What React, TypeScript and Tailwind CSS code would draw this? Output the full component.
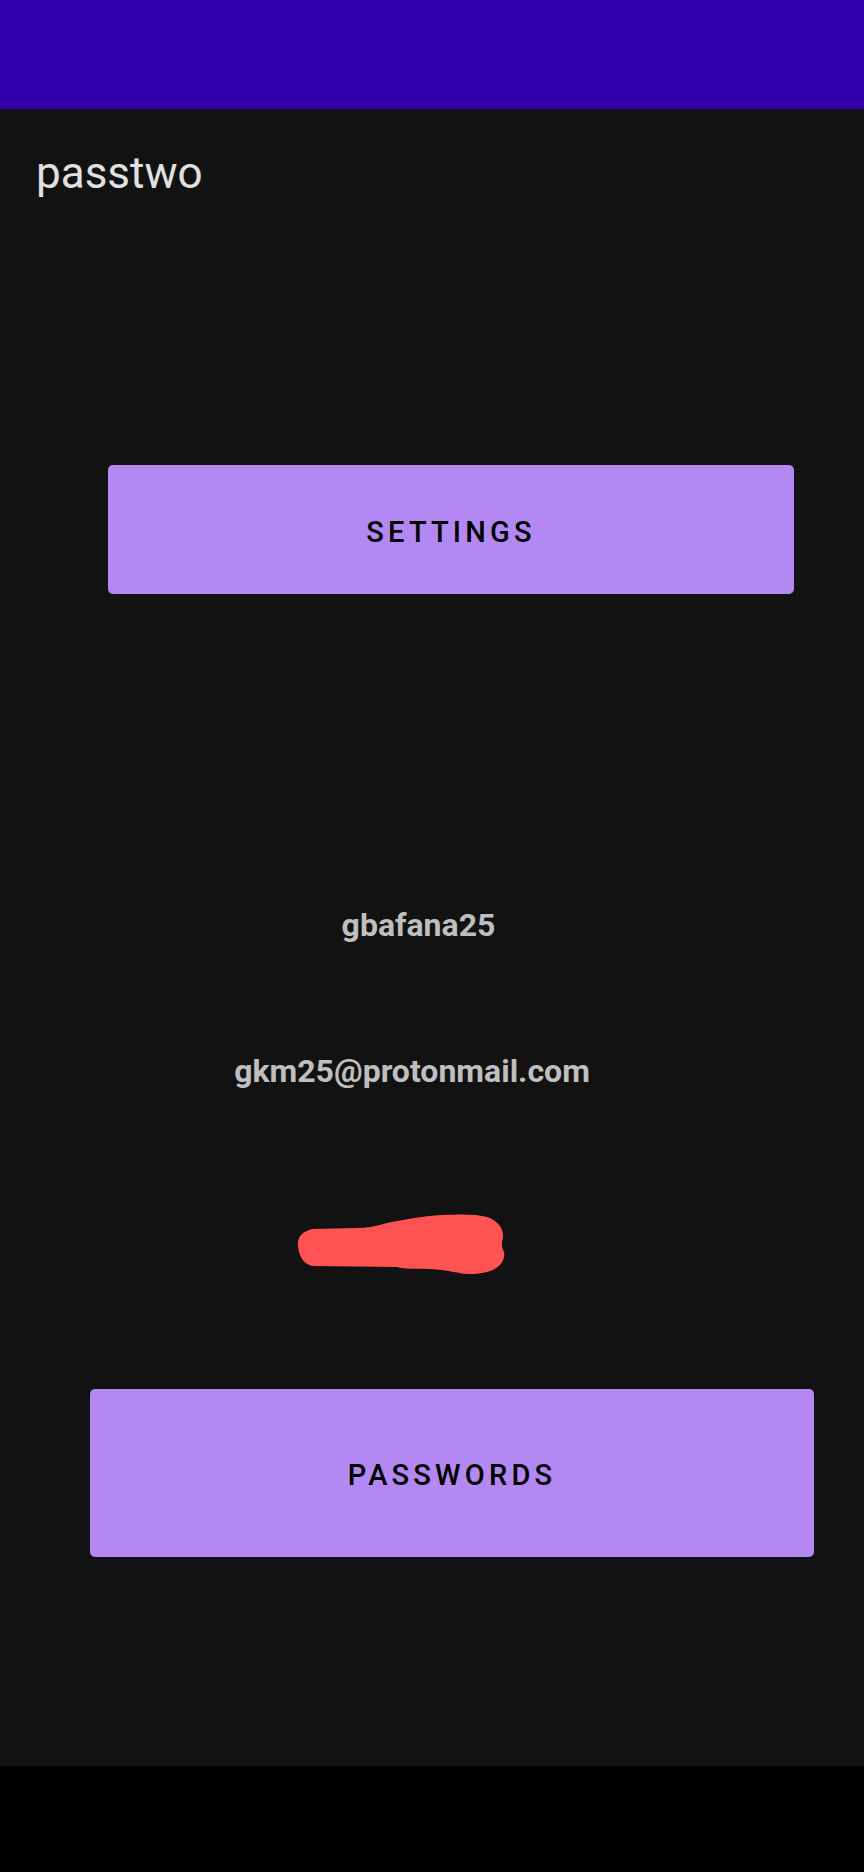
import React from 'react';

const App: React.FC = () => {
  return (
    <div className="w-[864px] h-[1872px] flex flex-col bg-black font-['Roboto',sans-serif]">
      {/* status / top bar */}
      <div className="h-[109px] bg-[#3100ab]" />

      <div className="h-[1657px] bg-[#121212] flex flex-col">
        <h1 className="mt-[40px] ml-[36px] text-[44px] leading-[48px] font-normal text-[#e1e1e1]">
          passtwo
        </h1>

        <button className="mt-[268px] ml-[108px] w-[686px] h-[129px] pt-[6px] rounded-[5px] bg-[#b388f3] text-black text-[29px] font-medium tracking-[4.2px] flex items-center justify-center">
          SETTINGS
        </button>

        <p className="mt-[311px] pr-[27px] text-center text-[32px] leading-[40px] font-bold text-[#bfbfbf]">
          gbafana25
        </p>

        <p className="mt-[106px] pr-[40px] text-center text-[32px] leading-[40px] font-bold text-[#bfbfbf]">
          gkm25@protonmail.com
        </p>

        {/* scribbled out password */}
        <svg className="mt-[123px] ml-[297px]" width="208" height="61" viewBox="0 0 208 61">
          <path
            d="M16,15 C6,17 0,22 1,32 C2,44 8,52 18,52 L100,53 C110,56 130,54 145,56 C160,58 170,62 185,59 C200,57 209,48 207,38 C205,33 204,30 206,24 C207,14 200,6 190,3 C180,0 165,0 145,1 C125,2 105,6 90,9 C80,12 70,14 60,14 Z"
            fill="#ff5252"
          />
        </svg>

        <button className="mt-[114px] ml-[90px] w-[724px] h-[168px] pt-[6px] rounded-[5px] bg-[#b388f3] text-black text-[29px] font-medium tracking-[4.2px] flex items-center justify-center">
          PASSWORDS
        </button>
      </div>

      <div className="flex-1 bg-black" />
    </div>
  );
};

export default App;
